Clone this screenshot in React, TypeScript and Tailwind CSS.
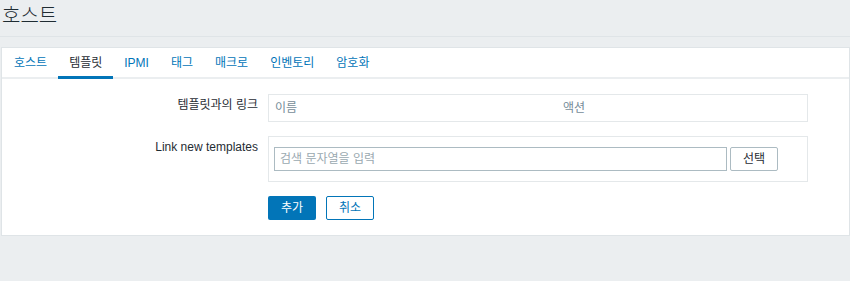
import React from "react";

const tabs = ["호스트", "템플릿", "IPMI", "태그", "매크로", "인벤토리", "암호화"];

export default function App() {
  const active = 1;

  return (
    <div
      className="min-h-[281px] w-[850px] bg-[#ebeef0] text-[12px] text-[#1f2c33]"
      style={{ fontFamily: '"Liberation Sans", "Noto Sans CJK KR", sans-serif' }}
    >
      <div className="flex h-[37px] items-start border-b border-[#dfe4e7] pl-[2px] pt-[4px]">
        <h1 className="text-[20px] leading-[24px] font-light">호스트</h1>
      </div>

      <div className="mt-[10px] ml-[1px] border border-[#dfe4e7] bg-white">
        <div className="flex h-[31px] border-b-2 border-[#ebeef0] pl-[1px]">
          {tabs.map((t, i) => (
            <div
              key={t}
              className={
                i === active
                  ? "-mb-[2px] flex items-center border-b-[3px] border-[#0275b8] px-[11px] pt-[2px] text-[#1f2c33]"
                  : "flex items-center px-[11px] text-[#0275b8]"
              }
            >
              {t}
            </div>
          ))}
        </div>

        <div className="flex flex-col gap-[14px] pt-[15px] pb-[15px]">
          <div className="flex items-start">
            <div className="w-[266px] pr-[10px] pt-[4px] text-right leading-[14px]">템플릿과의 링크</div>
            <div className="flex h-[28px] w-[540px] items-center border border-[#e4e8ea] text-[#768d99]">
              <div className="w-[294px] pl-[6px]">이름</div>
              <div>액션</div>
            </div>
          </div>

          <div className="flex items-start">
            <div className="w-[266px] pr-[10px] pt-[4px] text-right leading-[14px]">Link new templates</div>
            <div className="flex w-[540px] items-center gap-[3px] border border-[#e4e8ea] px-[5px] py-[10px]">
              <div className="flex h-[24px] w-[453px] items-center border border-[#acbbc2] pl-[5px] text-[#9aa9b0]">
                검색 문자열을 입력
              </div>
              <button className="flex h-[24px] w-[48px] items-center justify-center rounded-[2px] border border-[#acbbc2] bg-white text-[#1f2c33]">
                선택
              </button>
            </div>
          </div>

          <div className="flex items-center gap-[10px] pl-[266px]">
            <button className="flex h-[24px] w-[48px] items-center justify-center rounded-[2px] bg-[#0275b8] text-white">
              추가
            </button>
            <button className="flex h-[24px] w-[48px] items-center justify-center rounded-[2px] border border-[#0275b8] bg-white text-[#0275b8]">
              취소
            </button>
          </div>
        </div>
      </div>
    </div>
  );
}
